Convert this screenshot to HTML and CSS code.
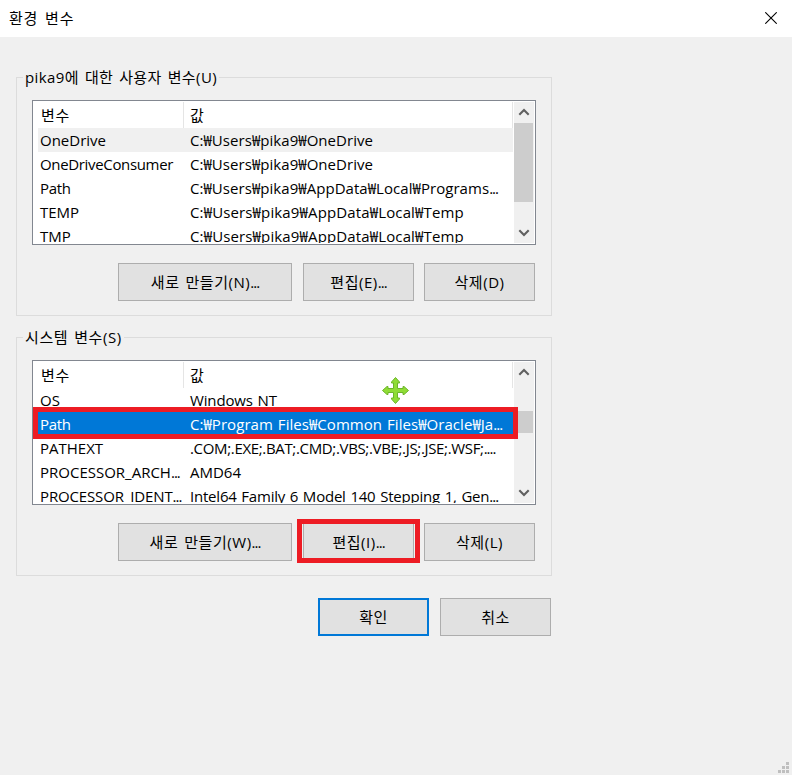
FILE: index.html
```
<!DOCTYPE html>
<html lang="ko">
<head>
<meta charset="utf-8">
<title>환경 변수</title>
<link rel="stylesheet" href="styles.css">
</head>
<body>
<header class="titlebar"><h1>환경 변수</h1>
<svg class="close" width="12" height="12" viewBox="0 0 12 12"><path d="M.3.3 11.7 11.7M11.7.3.3 11.7"/></svg></header>
<main class="content">
<section class="group">
<h2>pika9에 대한 사용자 변수(U)</h2>
<div class="list">
<div class="table">
<div class="row head"><div>변수</div><div>값</div></div>
<div class="row hover"><div>OneDrive</div><div class="path">C:₩Users₩pika9₩OneDrive</div></div>
<div class="row"><div class="tighter">OneDriveConsumer</div><div class="path">C:₩Users₩pika9₩OneDrive</div></div>
<div class="row"><div class="tighter">Path</div><div class="path">C:₩Users₩pika9₩AppData₩Local₩Programs<span class="dots">...</span></div></div>
<div class="row"><div>TEMP</div><div class="path-wide">C:₩Users₩pika9₩AppData₩Local₩Temp</div></div>
<div class="row"><div>TMP</div><div class="path-wide">C:₩Users₩pika9₩AppData₩Local₩Temp</div></div>
</div>
<div class="scroll"><svg width="12" height="8" viewBox="0 0 12 8"><path d="M1.3 6.8 6 2.1l4.7 4.7"/></svg><i class="thumb"></i><svg class="down" width="12" height="8" viewBox="0 0 12 8"><path d="M1.3 1.2 6 5.9l4.7-4.7"/></svg></div>
</div>
<div class="buttons"><button class="wide">새로 만들기(N)<span class="dots">...</span></button><button>편집(E)<span class="dots">...</span></button><button>삭제(D)</button></div>
</section>
<section class="group">
<h2 class="loose">시스템 변수(S)</h2>
<div class="list">
<div class="table">
<div class="row head"><div>변수</div><div>값</div></div>
<div class="row"><div>OS</div><div class="snug">Windows NT</div></div>
<div class="row selected"><div class="tighter">Path</div><div class="path">C:₩Program Files₩Common Files₩Oracle₩Ja<span class="dots">...</span></div></div>
<div class="row"><div>PATHEXT</div><div class="tighter">.COM;.EXE;.BAT;.CMD;.VBS;.VBE;.JS;.JSE;.WSF;<span class="dots">....</span></div></div>
<div class="row"><div>PROCESSOR_ARCH<span class="dots">...</span></div><div>AMD64</div></div>
<div class="row"><div class="snug">PROCESSOR_IDENT<span class="dots">...</span></div><div class="tight">Intel64 Family 6 Model 140 Stepping 1, Gen<span class="dots">...</span></div></div>
</div>
<div class="scroll low"><svg width="12" height="8" viewBox="0 0 12 8"><path d="M1.3 6.8 6 2.1l4.7 4.7"/></svg><i class="thumb"></i><svg class="down" width="12" height="8" viewBox="0 0 12 8"><path d="M1.3 1.2 6 5.9l4.7-4.7"/></svg></div>
<i class="mark mark-row"></i>
<svg class="move" width="27" height="27" viewBox=".5 .5 27 27"><path d="M14 1 18 5.5V6.5H16V12H21.5V10H22.5L27 14 22.5 18H21.5V16H16V21.5H18V22.5L14 27 10 22.5V21.5H12V16H6.5V18H5.5L1 14 5.5 10H6.5V12H12V6.5H10V5.5Z"/></svg>
</div>
<div class="buttons"><button class="wide">새로 만들기(W)<span class="dots">...</span></button><button class="marked">편집(I)<span class="dots">...</span><i class="mark mark-button"></i></button><button>삭제(L)</button></div>
</section>
<footer class="actions"><button class="primary">확인</button><button>취소</button></footer>
</main>
<svg class="grip" width="11" height="11" viewBox="0 0 11 11"><path d="M8 0h3v3H8zM4 4h3v3H4zM8 4h3v3H8zM0 8h3v3H0zM4 8h3v3H4zM8 8h3v3H8z"/></svg>
</body>
</html>
```
FILE: styles.css
```
* { box-sizing: border-box; }
body {
  margin: 0;
  width: 792px;
  height: 775px;
  overflow: hidden;
  position: relative;
  background: #f0f0f0;
  color: #000;
  font: 15px/24px "Open Sans", "Noto Sans CJK KR", sans-serif;
}
h1, h2 { margin: 0; font: inherit; white-space: pre; }
h1 { letter-spacing: .8px; word-spacing: 2.2px; }
h2 { letter-spacing: .42px; word-spacing: 1.5px; }
h2.loose { letter-spacing: .6px; padding-left: 2px; }
.titlebar {
  display: flex;
  align-items: center;
  justify-content: space-between;
  height: 37px;
  padding: 0 15px 2px 9px;
  background: #fff;
}
.close { fill: none; stroke: #000; stroke-width: 1.1; }
.content { width: 552px; padding: 40px 0 0 16px; }
.group {
  display: flex;
  flex-direction: column;
  height: 239px;
  margin-bottom: 21px;
  border: 1px solid #dcdcdc;
  padding: 0 15px;
}
.group h2 {
  align-self: flex-start;
  height: 24px;
  margin: -13px 0 0 -9px;
  padding-right: 2px;
  background: #f0f0f0;
}
.group h2:not(.loose) { padding-left: 2px; }
.list {
  position: relative;
  display: flex;
  height: 145px;
  margin-top: 11px;
  padding: 1px 1px 1px 5px;
  border: 1px solid #828790;
  background: #fff;
}
.table { width: 475px; overflow: hidden; }
.row { display: grid; grid-template-columns: 145px 1fr; height: 24px; white-space: pre; }
.row > div { padding-left: 2px; }
.row > div + div { padding-left: 7px; word-spacing: 1px; }
.row.head { height: 26px; line-height: 26px; letter-spacing: .7px; }
.head > div { border-right: 1px solid #e5e5e5; }
.head > div:first-child { width: 146px; padding-left: 3px; }
.snug { letter-spacing: -.14px; }
.tight { letter-spacing: -.21px; }
.tighter { letter-spacing: -.34px; }
.path { letter-spacing: .05px; }
.path-wide { letter-spacing: .14px; }
.dots { letter-spacing: -1px; }
.hover { background: #f0f0f0; }
.selected { background: #0078d7; color: #fff; }
.scroll {
  display: flex;
  flex-direction: column;
  width: 20px;
  margin-left: 1px;
  padding: 6px 1px 6px 0;
  background: #f0f0f0;
}
.scroll svg { align-self: center; fill: none; stroke: #606060; stroke-width: 2.1; }
.thumb { height: 79px; margin-top: 7px; background: #cdcdcd; }
.low .thumb { height: 22px; margin-top: 35px; }
.scroll .down { margin-top: auto; }
.buttons { display: flex; gap: 11px; margin: 18px 1px 0 0; justify-content: flex-end; }
.buttons button:last-child { margin-left: -1px; }
button {
  position: relative;
  width: 111px;
  height: 38px;
  padding: 0;
  border: 1px solid #adadad;
  border-radius: 0;
  background: #e1e1e1;
  color: #000;
  font: inherit;
  letter-spacing: .55px;
  word-spacing: 1.5px;
}
.wide { width: 174px; }
.mark { position: absolute; border: 5px solid #ed1c24; }
.mark-row { left: 0; top: 46px; width: 485px; height: 32px; }
.mark-button { left: -7px; top: -5px; width: 123px; height: 44px; }
.move { position: absolute; left: 349px; top: 16px; fill: #8fdc35; stroke: #6cb52a; stroke-width: 1; }
.actions { display: flex; justify-content: flex-end; gap: 11px; padding: 1px 1px 0 0; }
.primary { border: 2px solid #0078d7; }
.grip { position: absolute; right: 3px; bottom: 2px; fill: #bfbfbf; }
```
